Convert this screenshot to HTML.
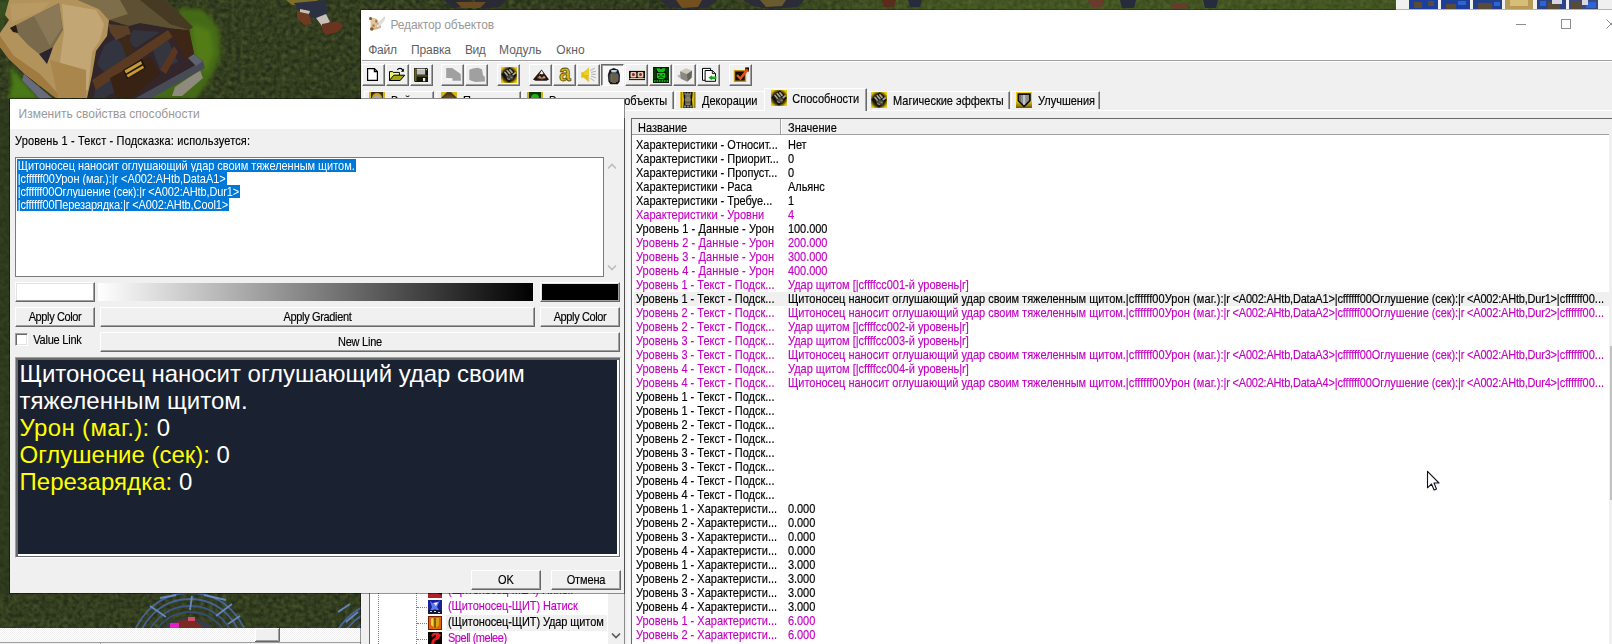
<!DOCTYPE html>
<html lang="ru"><head><meta charset="utf-8"><title>Редактор объектов</title>
<style>
*{box-sizing:border-box}
html,body{margin:0;padding:0}
body{width:1612px;height:644px;overflow:hidden;position:relative;background:#333e1f;font-family:"Liberation Sans",sans-serif;font-size:11px;color:#000}
.abs{position:absolute}
#bg{position:absolute;left:0;top:0;width:1612px;height:644px}
#main{position:absolute;left:360px;top:9px;width:1260px;height:640px;background:#f0f0f0;border-left:1px solid rgba(0,0,0,0.4);border-top:1px solid rgba(0,0,0,0.25);background-clip:padding-box}
#main .title{position:absolute;left:0;top:0;width:100%;height:28px;background:#fff}
#main .title .t{position:absolute;left:29.5px;top:7.6px;font-size:12px;color:#999;letter-spacing:-0.15px}
#main .menu{position:absolute;left:0;top:28px;width:100%;height:23px;background:#fff}
#main .menu span{position:absolute;top:5px;font-size:12px;color:#5f5f5f}
.row{position:absolute;left:634px;width:975px;height:14px;line-height:14px;white-space:nowrap;font-size:11px}
.row .c1{position:absolute;left:2px;top:0}
.row .c2{position:absolute;left:154px;top:0;letter-spacing:-0.058px}
.row.mag{color:#c400c4}
.row.w .c1{letter-spacing:0.1px}
.row.sel{background:#f0f0f0}
#dlg{position:absolute;left:9px;top:98px;width:616px;height:496px;background:#f0f0f0;background-clip:padding-box;border:1px solid rgba(0,0,0,0.42)}
#dlg .title{position:absolute;left:0;top:0;width:100%;height:30px;background:#fff}
#dlg .title span{position:absolute;left:8.5px;top:8px;font-size:12px;color:#999;letter-spacing:0}
.btn{position:absolute;background:#f0f0f0;border:1px solid;border-color:#fff #696969 #696969 #fff;box-shadow:inset -1px -1px 0 #a0a0a0;text-align:center;font-size:11px;white-space:nowrap}
.ta{height:13px;line-height:13px;font-size:11px;white-space:nowrap;background:#0078d7;color:#fff;padding:0 1px 0 0.7px}
.ta span{position:relative;top:1px}
.pv{font-size:24px;line-height:27px;color:#fff;white-space:nowrap}
.pv .y{color:#ffff00}
.tb{position:absolute;top:64px;width:23px;height:22px;background:#f0f0f0;border:1px solid;border-color:#fff #696969 #696969 #fff;box-shadow:inset -1px -1px 0 #a0a0a0}
.tb svg{position:absolute;left:3px;top:2px}
.tb.dn{background:#f8f8f8;border-color:#696969 #fff #fff #696969;box-shadow:inset 1px 1px 0 #a0a0a0}
.tab{position:absolute;top:91px;height:18px;background:#f0f0f0;border:1px solid;border-color:#fff #696969 transparent #fff;box-shadow:inset -1px 0 0 #a0a0a0;border-bottom:none;font-size:11px;line-height:14px;white-space:nowrap}
.tab svg{position:absolute;left:4px;top:0px}
.tab span{position:absolute;left:26px;top:2px}
.tab.act{top:88px;height:23px;z-index:2}
.tr{font-size:11px;line-height:14px;height:14px;white-space:nowrap}
.tr.mag{color:#c400c4}
.row .c1,.row .c2,.sy,.tr,.tab span{transform:scaleY(1.09);transform-origin:0 10.6px}
.s{display:inline-block;line-height:14px;transform:scaleY(1.09);transform-origin:0 10.6px}
.ta span{display:inline-block;transform:scaleY(1.09);transform-origin:0 10.1px}
.row .c1,.row .c2,.sy,.tr,.tab span,.s{-webkit-text-stroke:0.15px currentColor}
</style></head>
<body>
<svg id="bg" width="1612" height="644" viewBox="0 0 1612 644">
<defs>
<filter id="gr" x="0" y="0" width="100%" height="100%" color-interpolation-filters="sRGB"><feTurbulence type="fractalNoise" baseFrequency="0.22" numOctaves="2" seed="3" result="n"/><feColorMatrix type="matrix" values="0 0 0 0 0.29  0 0 0 0 0.34  0 0 0 0 0.17  1.1 0.9 0 0 -0.62"/></filter>
<filter id="th" x="0" y="0" width="100%" height="100%"><feTurbulence type="fractalNoise" baseFrequency="0.08 0.5" numOctaves="2" seed="5"/><feColorMatrix type="matrix" values="0 0 0 0 0.35  0 0 0 0 0.25  0 0 0 0 0.1  1.2 0.8 0 0 -0.7"/><feComposite in2="SourceGraphic" operator="in"/></filter>
<pattern id="dith" width="2" height="2" patternUnits="userSpaceOnUse"><rect width="2" height="2" fill="#fff"/><rect width="1" height="1" fill="#f0f0f0"/><rect x="1" y="1" width="1" height="1" fill="#f0f0f0"/></pattern>
<filter id="bl" x="-10%" y="-10%" width="120%" height="120%"><feGaussianBlur stdDeviation="2.2"/></filter>
<linearGradient id="tg" x1="0" y1="0" x2="1" y2="0"><stop offset="0" stop-color="#6a8a2a" stop-opacity="0"/><stop offset="0.350" stop-color="#6a8a2a" stop-opacity="0.300"/><stop offset="1" stop-color="#6a8a2a" stop-opacity="0.300"/></linearGradient>
</defs>
<rect width="1612" height="644" fill="#252e18"/>
<rect width="1612" height="644" filter="url(#gr)"/>
<!-- bright grass near hut -->
<g filter="url(#bl)">
<path d="M180 8 L204 10 L219 28 L221 55 L212 76 L196 99 L150 99 Z" fill="#456a14"/>
<path d="M192 24 L210 30 L214 52 L206 72 L196 66Z" fill="#527c12"/>
<path d="M10 66 L40 99 L8 99 L12 84Z" fill="#4a7a18"/>
<path d="M0 0 L9 0 L5 15 L0 33Z" fill="#35521c"/>
</g>
<path d="M175 87 L200 70 L203 78 L182 96 L172 96Z" fill="#8e8a7c"/>
<path d="M24 74 L52 98 L40 99 L22 80Z" fill="#676b7c"/>
<!-- hut wall -->
<path d="M109 20 L129 26 L140 23 L169 28 L189 30 L194 54 L203 61 L137 98 L87 98 L92 75 L96 51 L107 36 Z" fill="#33262a"/>
<path d="M104 46 L116 38 L128 50 L124 62 L104 72 L97 64Z" fill="#32343f"/>
<path d="M133 30 L160 32 L136 48 L128 42Z" fill="#34343e"/>
<path d="M152 48 L168 40 L178 62 L160 70Z" fill="#33353f"/>
<path d="M96 84 L120 74 L126 86 L104 98 L94 98Z" fill="#33343f"/>
<path d="M92 80 L168 30 L174 36 L96 90Z" fill="#5a3a20"/>
<path d="M168 30 L189 30 L194 54 L186 60 L176 42Z" fill="#3e2616"/>
<path d="M110 78 L150 56 L160 74 L132 98 L116 98Z" fill="#382214"/>
<path d="M108 24 L128 26 L131 34 L116 40 L110 32Z" fill="#5a4026"/>
<path d="M120 40 L128 34 L134 52 L126 56Z" fill="#3e2818"/>
<path d="M160 70 L174 46 L178 52 L166 74Z" fill="#5a3620"/>
<path d="M123 70 L142 59 L146 68 L127 79Z" fill="#1e1610"/>
<path d="M124.500 70.500 L141 61 L142 64 L126 73.500Z M126.500 75 L143 65.500 L144 68 L128 77.500Z" fill="#c89a34"/>
<path d="M203 61 L205 68 L150 99 L134 99 Z" fill="#474b56"/>
<path d="M194 54 L203 61 L196 66 L188 58Z" fill="#5e6370"/>
<!-- roof shadow part -->
<path d="M78 0 L166 0 L193 27 L189 30 L169 28 L140 23 L129 26 L109 20 L99 9Z" fill="#5e5032"/>
<path d="M78 0 L120 0 L128 14 L109 20 L99 9Z" fill="#7e6e4a"/>
<path d="M140 0 L166 0 L193 27 L189 30 L170 24Z" fill="#463a22"/>
<!-- light thatch -->
<path d="M9 0 L78 0 L99 9 L109 20 L107 36 L96 51 L92 75 L87 98 L56 98 L26 75 L9 59 L0 47 L0 33 L9 20 L5 15 Z" fill="#b3935c"/>
<path d="M62 4 L96 10 L104 24 L100 40 L92 52 L88 90 L72 92 L60 62 L64 32Z" fill="#c2a674"/>
<path d="M0 36 L14 56 L40 74 L62 98 L56 98 L26 75 L9 59 L0 47Z" fill="#a07a3e"/>
<path d="M10 4 L50 2 L40 12 L12 22Z" fill="#b89a62"/>
<path d="M50 60 L86 70 L86 98 L58 98Z" fill="#a8864c"/>
<!-- dormer -->
<path d="M10 28 L59 3 L63 30 L53 47 L39 54 L28 45 L17 33 Z" fill="#7a6a4c"/>
<path d="M34 16 L59 3 L62 28 L50 46Z" fill="#8a7856"/>
<path d="M39 54 L53 47 L51 53 L47 64Z" fill="#2a2430"/>
<path d="M10 28 L16 25 L18 33 L13 32Z" fill="#2a1c14"/>
<!-- figure top -->
<path d="M286 0 L318 0 L316 4 L292 5Z" fill="#7e6e2c"/>
<path d="M294 3 L326 0 L327 14 L318 20 L300 12Z" fill="#2b3142"/>
<path d="M297 10 L309 14 L312 24 L304 25 L297 18Z" fill="#6d3a22"/>
<path d="M316 18 L326 14 L330 22 L322 26Z" fill="#c8c0b8"/>
<path d="M322 24 L338 21 L343 26 L338 32 L326 35 L322 30Z" fill="#6a3420"/>
<path d="M300 9 L310 11 L309 14 L300 12Z" fill="#c8c0b8"/>
<rect x="700" y="0" width="696" height="10" fill="url(#tg)"/>
<!-- top strip figures -->
<path d="M444 0 H470 L466 6 L452 8Z M474 0 H506 L500 7 L482 9 Z" fill="#2a2a34"/>
<path d="M456 2 H486 L480 8 L462 8Z" fill="#6a4a20"/>
<path d="M660 0 H716 L708 8 L690 9 L668 7Z" fill="#2b2c38"/><path d="M676 0 H702 L698 7 L682 8Z" fill="#74501e"/>
<path d="M744 0 H804 L798 7 L770 9 L752 6Z" fill="#2b2c38"/><path d="M760 0 H786 L782 6 L766 7Z" fill="#6a5a30"/>
<path d="M882 0 H896 L894 7 L884 7Z" fill="#5a2c1c"/>
<path d="M908 0 H922 L920 7 L910 7Z M1120 0 H1136 L1134 8 L1122 8Z M1203 0 H1218 L1216 8 L1205 8Z" fill="#262c3c"/>
<path d="M1088 0 H1104 L1102 7 L1092 8Z M1170 3 H1188 L1186 8 L1174 9Z" fill="#6a3a2a"/>
<!-- top-right panel -->
<rect x="1396" y="0" width="216" height="10" fill="#f0f0f0"/>
<g>
<rect x="1409" y="0" width="29" height="9" fill="#1c3f9c"/><rect x="1441" y="0" width="29" height="9" fill="#1d3f98"/><rect x="1473" y="0" width="29" height="9" fill="#243f8a"/><rect x="1505" y="0" width="28" height="9" fill="#b89a58"/><rect x="1537" y="0" width="29" height="9" fill="#2a4286"/><rect x="1569" y="0" width="29" height="9" fill="#3a4a7a"/>
<path d="M1414 2 h8 v6 h-8z M1428 1 h6 v5 h-6z M1446 4 h10 v5 h-10z M1478 3 h14 v6 h-14z M1548 2 h12 v7 h-12z M1572 1 h10 v8 h-10z" fill="#5a4a38"/>
<path d="M1458 1 h8 v4 h-8z M1494 2 h6 v4 h-6z M1540 1 h6 v5 h-6z M1586 2 h10 v6 h-10z" fill="#2b63d8"/>
<path d="M1510 0 h18 v6 h-18z" fill="#d8bc7a"/>
<path d="M1552 0 h10 v4 h-10z M1582 0 h6 v5 h-6z" fill="#d8d8e0"/>
</g>
<!-- left strip darker -->
<rect x="0" y="99" width="10" height="495" fill="#2c361e" opacity=".55"/>
<!-- bottom magic circles -->
<g fill="none" stroke="#4a6aa6" stroke-width="1.800" opacity=".85">
<circle cx="190" cy="652" r="59"/><circle cx="190" cy="652" r="53"/><circle cx="190" cy="652" r="46" stroke="#3e5a94"/><circle cx="190" cy="652" r="40" stroke="#38507e"/>
<circle cx="392" cy="664" r="64"/><circle cx="392" cy="664" r="57"/><circle cx="392" cy="664" r="50" stroke="#3e5a94"/>
</g>
<g stroke="#6b8ed0" stroke-width="1.800" fill="none" opacity=".9"><path d="M150 606 L166 617 M192 596 L190 610 M232 604 L216 616 M160 598 L176 595 M204 595 L226 600 M240 616 L228 624 M338 612 L350 604 M346 622 L358 612"/></g>
<ellipse cx="188" cy="640" rx="30" ry="22" fill="#353c4a"/>
<ellipse cx="186" cy="630" rx="17" ry="10" fill="#7a2a22"/>
<path d="M170 623 h9 v5 h-9z" fill="#e020c8"/><path d="M188 617 h7 v4 h-7z" fill="#d84a6a"/>
<!-- horizontal scrollbar of underlying window -->
<rect x="0" y="628" width="361" height="14" fill="url(#dith)"/>
<rect x="255" y="628" width="25" height="14" fill="#f0f0f0"/>
<path d="M255 641.5 H279.5 V628" fill="none" stroke="#696969"/><path d="M255.5 641 V628.5 H279" fill="none" stroke="#fff"/><path d="M256 640.5 H278.5 V629" fill="none" stroke="#a0a0a0"/>
<rect x="0" y="642" width="361" height="2" fill="#f0f0f0"/>
<rect x="0" y="642" width="361" height="1" fill="#a0a0a0"/>
<rect x="100" y="643" width="1" height="1" fill="#a0a0a0"/>
</svg>

<div id="main">
 <div class="title"><span class="t">Редактор объектов</span></div>
 <div class="menu"><span style="left:7.2px;letter-spacing:-0.2px">Файл</span><span style="left:50px;letter-spacing:-0.1px">Правка</span><span style="left:104px;letter-spacing:-0.5px">Вид</span><span style="left:138px">Модуль</span><span style="left:195.3px;letter-spacing:0.15px">Окно</span></div>
</div>
<div class="abs" style="left:362px;top:60px;width:1250px;height:1px;background:#a0a0a0"></div>
<div class="abs" style="left:362px;top:61px;width:1250px;height:1px;background:#fff"></div>
<!-- window icon -->
<svg class="abs" style="left:368px;top:16px" width="18" height="16" viewBox="0 0 18 16"><path d="M9 8 L16.500 1 L16 4.500 L11 10 Z" fill="#e4e2dc" stroke="#b9b5ab" stroke-width=".5"/><path d="M2.500 2 C5 1.500 8 2.500 10 4 L9 12 C7 13.500 4 14 2.500 13.500 Z" fill="#dcc79c"/><path d="M1 2.500 a1.600 1.600 0 1 0 3.200 0 a1.600 1.600 0 1 0 -3.200 0" fill="#7a5a38"/><path d="M2 13.500 C5 14.500 10 13.500 13 11.500 L13 9.500 C10 11 6 12 3 11.500Z" fill="#cdb48a"/><circle cx="3.800" cy="13" r="1.700" fill="#7a5a38"/><rect x="4.500" y="8.600" width="2" height="2" fill="#e04a2a"/><path d="M7.500 3.500 L9.500 4.500 L9 7 L7 6Z" fill="#b9703c"/><path d="M9 6 L10.500 7 L10 9 L8.800 8.500Z" fill="#9ab0b8"/></svg>
<!-- caption buttons -->
<div class="abs" style="left:1516px;top:24px;width:10px;height:1px;background:#8c8c8c"></div>
<div class="abs" style="left:1561px;top:19px;width:10px;height:10px;border:1px solid #8c8c8c"></div>
<svg class="abs" style="left:1606px;top:19px" width="10" height="10" viewBox="0 0 10 10"><path d="M0.5 0.5 L9.5 9.5 M9.5 0.5 L0.5 9.5" stroke="#8c8c8c" stroke-width="1" fill="none"/></svg>
<!-- toolbar -->
<div class="tb" style="left:362px"><svg width="16" height="16" viewBox="0 0 16 16"><path d="M1.600 1.600 H8.400 L11.400 4.600 V13.400 H1.600 Z" fill="#fff" stroke="#000" stroke-width="1.200"/><path d="M8.400 1.600 V4.600 H11.400" fill="none" stroke="#000" stroke-width="1.200"/></svg></div>
<div class="tb" style="left:386px"><svg width="17" height="16" viewBox="-1 0 17 16" style="left:2px"><path d="M-0.500 13.400 V4.600 H2.600 L3.200 5.400 H9.400 V8.200" fill="#f2f272" stroke="#000" stroke-width="1"/><path d="M4.300 6.700 H8.700" stroke="#fafad0" stroke-width="1"/><path d="M3.800 8.200 H14.700 L10.200 13.500 H-0.700 Z" fill="#a6a612" stroke="#000" stroke-width="1"/><path d="M7.300 3 C8.500 0.800 11.500 0.800 13 3.400" fill="none" stroke="#000" stroke-width="1.100"/><path d="M13.900 1.600 V4.700 H10.900 Z" fill="#000"/></svg></div>
<div class="tb" style="left:410px"><svg width="16" height="16" viewBox="0 0 16 16"><path d="M0 1 H13 L14 2 V15 H1 L0 14 Z" fill="#15150a"/><rect x="0.500" y="1.500" width="2" height="12.500" fill="#6b6524"/><rect x="2.800" y="1.800" width="8.400" height="5.800" fill="#bdbdbd"/><rect x="2.800" y="1.800" width="8.400" height="1.200" fill="#d8d8d8"/><rect x="2.500" y="8.600" width="11" height="0.700" fill="#a39626"/><rect x="9" y="11" width="2.200" height="3.200" fill="#ecece4"/><rect x="12" y="2.200" width="1" height="1" fill="#e8e8e8"/></svg></div>
<div class="tb" style="left:441px"><svg width="17" height="16" viewBox="0 0 17 16"><path d="M1.200 11.900 H7.500" stroke="#fff" stroke-width="1"/><path d="M1.200 1 H7.200 L15.700 7.100 L16 13.800 H7.500 V11.200 L1.200 10.900 Z" fill="#a0a0a0"/></svg></div>
<div class="tb" style="left:465px"><svg width="16" height="16" viewBox="0 0 16 16"><path d="M0.300 2.700 L4 1.600 L8.500 0.800 L13 2.300 L14 8.300 L15.900 10.100 L15.900 14.600 L6.200 15 L0.300 13.100 Z" fill="#a0a0a0"/></svg></div>
<div class="tb" style="left:497px"><svg width="16" height="16" viewBox="0 0 16 16"><defs><radialGradient id="fg" cx="50%" cy="50%" r="72%"><stop offset="0.550" stop-color="#3a3004"/><stop offset="0.800" stop-color="#e6c40c"/><stop offset="1" stop-color="#f2d410"/></radialGradient></defs><rect width="16" height="16" fill="url(#fg)"/><path d="M8.800 0.200 L15.800 8 L8 15.800 L0.200 7.600 Z" fill="#14130c"/><path d="M4 5.500 L6.300 8.200 M6.300 3.700 L8.800 6.600 M8.900 2.800 L11 5.400 M12.200 7.600 L14.200 6" stroke="#aaa89c" stroke-width="1.700" stroke-linecap="round"/><path d="M5 9.500 L9.500 7.200 L12.500 9.500 L11.500 12.500 L7.500 13 Z" fill="#4a4942"/><path d="M6 11.500 L9 12.800 M9.500 10 L11.500 10.800" stroke="#8d8b80" stroke-width="1.100"/></svg></div>
<div class="tb" style="left:529px"><svg width="16" height="16" viewBox="0 0 16 16"><path d="M8.500 2.600 L16 12.400 L13.500 13.800 H2.500 L0 12.400 Z" fill="#27140a"/><path d="M8.500 3.600 L10.500 6.500 L9 7.500 L7.300 6.800 L6 8 Z" fill="#f4f0ea"/><path d="M4 11 L6.500 8.500 L8.500 10.500 L11 8.500 L13 11 L9 12.500 Z" fill="#8a6a50"/><path d="M5.500 10.200 L7 9.200 L8 10.500 Z M10 10.500 L11.200 9.500 L12 11Z" fill="#e8e0d8"/></svg></div>
<div class="tb" style="left:553px"><svg width="16" height="16" viewBox="0 0 16 16"><text x="0" y="0" transform="translate(8 14.200) scale(0.86 1)" text-anchor="middle" font-family="Liberation Sans,sans-serif" font-weight="bold" font-size="24" fill="#d6be16" stroke="#5e5008" stroke-width="0.900">a</text></svg></div>
<div class="tb" style="left:577px"><svg width="16" height="16" viewBox="0 0 16 16"><path d="M0.300 5.300 H2.800 L7.800 0.800 V15 L2.800 10.500 H0.300 Z" fill="#e2c206" stroke="#d8c890" stroke-width="0.600"/><path d="M2.800 5.300 L7.800 0.800 V8 H2.800Z" fill="#ecd020"/><path d="M9.300 3.400 L13.800 1.200 M10 5.400 L14.900 4.200 M10.400 7.300 H14.900 M10 9 L14.900 10.900 M9.300 11.300 L13.400 13.900" stroke="#a8a8a8" stroke-width="0.900"/></svg></div>
<div class="tb dn" style="left:601px"><svg width="16" height="17" viewBox="0 0 16 17" style="left:4px;top:3px"><path d="M7.700 0 L12.200 1.700 L14 6.900 L13.700 13.600 L11.800 16.200 H4.400 L2.500 13.600 L1.800 6.900 L3.600 1.700 Z" fill="#15151a"/><path d="M4.800 2.100 H11.100 L10.300 4.500 H5.500 Z" fill="#a9c0ca"/><path d="M6 2.400 H9.500 L9 3.400 H6.500Z" fill="#dfeaf0"/><path d="M5.100 5.400 V14 M7 5.200 V15 M9 5.200 V15 M11 5.400 V14" stroke="#cdbb88" stroke-width="0.900"/><path d="M3.200 6.500 V12.500 M12.800 6.500 V12.500" stroke="#4a5460" stroke-width="1"/></svg></div>
<div class="tb" style="left:625px"><svg width="16" height="16" viewBox="0 0 16 16"><rect x="0" y="3.900" width="16.200" height="9.200" fill="#120a08"/><rect x="1.500" y="5" width="5.800" height="5.400" rx="1" fill="#e2cdb6"/><rect x="8.600" y="5" width="5.800" height="5.400" rx="1" fill="#e2cdb6"/><circle cx="4.400" cy="7.600" r="1.500" fill="#9c2222"/><circle cx="11.500" cy="7.600" r="1.500" fill="#9c2222"/><rect x="0.600" y="11" width="15" height="1.100" fill="#d9c8b4"/></svg></div>
<div class="tb" style="left:649px"><svg width="16" height="16" viewBox="0 0 16 16"><rect width="16" height="16" fill="#041a04"/><path d="M1 1 V12 M2.200 1 V12 M13.800 1 V12 M15 1 V12" stroke="#0c5a0c" stroke-width="0.700"/><path d="M3.500 1.200 H6.500 L8 2.200 L9.500 1.200 H12.500 L12 3.600 L10.400 5.200 H5.600 L4 3.600 Z" fill="#14c414"/><path d="M3.900 6 H12.200 V10.500 L10.500 11.900 H5.500 L3.900 10.500 Z" fill="#14c414"/><path d="M5 7.200 L7.200 7.800 V8.500 H5Z M11 7.200 L8.800 7.800 V8.500 H11Z" fill="#041a04"/><path d="M5.600 10.800 Q8 8.800 10.400 10.800" fill="none" stroke="#041a04" stroke-width="0.900"/><path d="M1 13.300 h1.700 v1.500 h-1.700z M3.500 13.300 h1.700 v1.500 h-1.700z M6 13.300 h1.700 v1.500 h-1.700z M8.500 13.300 h1.700 v1.500 h-1.700z M11 13.300 h1.700 v1.500 h-1.700z M13.500 13.300 h1.700 v1.500 h-1.700z" fill="#14c414"/></svg></div>
<div class="tb" style="left:673px"><svg width="16" height="16" viewBox="0 0 16 16"><path d="M0 8.800 L3.800 7.300 V11.700 Z" fill="#b4b4b4"/><path d="M3 4.300 L9 1.300 L15.100 3.400 L9.900 6.900 Z" fill="#cbc7b9"/><path d="M3 4.300 L9.900 6.900 L10.300 14.700 L3.800 11.700 Z" fill="#8b887f"/><path d="M9.900 6.900 L15.100 3.400 L14.700 10.800 L10.300 14.700 Z" fill="#67645c"/></svg></div>
<div class="tb" style="left:697px"><svg width="16" height="16" viewBox="0 0 16 16"><path d="M1.500 1.400 H9.600 V13.300 H1.500 Z" fill="#fff" stroke="#000" stroke-width="1"/><path d="M4.100 3.500 H11.300 L14.500 6.600 V14.300 H4.100 Z" fill="#fff" stroke="#000" stroke-width="1"/><path d="M11.300 3.500 V6.600 H14.500" fill="none" stroke="#000" stroke-width="0.900"/><path d="M7.500 10.800 L10.800 8.300 V9.400 H15.400 V12.300 H10.800 V13.300 Z" fill="#14a018"/><path d="M11.500 10 H14.500" stroke="#7ad07a" stroke-width="0.800"/></svg></div>
<div class="tb" style="left:729px"><svg width="16" height="16" viewBox="0 0 16 16"><rect x="1.500" y="3.700" width="11" height="10.600" fill="#120a04" stroke="#c89812" stroke-width="1.400"/><path d="M12.200 0.400 H16 V4.500 H12.200Z" fill="#0a0a0a"/><path d="M4 8 L7.400 11.600 L14.700 2.400" fill="none" stroke="#e2521a" stroke-width="2.500"/></svg></div>
<!-- tabs -->
<div class="tab" style="left:364px;width:70px"><svg width="16" height="16" viewBox="0 0 16 16"><rect width="16" height="16" fill="#d8b416"/><rect x="2" y="0" width="12" height="16" fill="#3a2e12"/><circle cx="8" cy="6" r="5" fill="#c9a020"/><circle cx="8" cy="6" r="3" fill="#a9a9a2"/></svg><span>Войска</span></div>
<div class="tab" style="left:436px;width:85px"><svg width="16" height="16" viewBox="0 0 16 16"><rect width="16" height="16" fill="#d8b416"/><path d="M8 -2 L18 8 L8 18 L-2 8Z" fill="#4a3a16"/><ellipse cx="8" cy="6" rx="5" ry="3" fill="#6a4a1e"/></svg><span>Предметы</span></div>
<div class="tab" style="left:522px;width:152px"><svg width="16" height="16" viewBox="0 0 16 16"><rect width="16" height="16" fill="#c9b312"/><rect x="2" y="0" width="12" height="16" fill="#0a3a08"/><circle cx="8" cy="6" r="4" fill="#1fae16"/></svg><span>Разрушаемые объекты</span></div>
<div class="tab" style="left:675px;width:91px"><svg width="16" height="16" viewBox="0 0 16 16"><rect width="16" height="16" fill="#d9b912"/><path d="M1.500 0 V16 M14.500 0 V16" stroke="#8a7408" stroke-width="0.800"/><path d="M3.300 0 Q4.800 8 3.300 16 H12.700 Q11.200 8 12.700 0 Z" fill="#0c0b08"/><path d="M4.300 0.600 H5.800 V1.600 H7 V0.600 H8.600 V1.600 H9.800 V0.600 H11.200 V2.800 H10.500 V6.800 H11.200 V8.400 H10.500 V13 H5.300 V8.400 H4.700 V6.800 H5.300 V2.800 H4.300 Z" fill="#878069"/><path d="M6 3.500 H9.800 V4.500 H6Z M6 9.500 H9.800 V11.500 H6Z" fill="#5e5948"/><path d="M4 13.600 h2.200 v1.800 h-2.200z M6.800 13.600 h2.200 v1.800 h-2.200z M9.600 13.600 h2.200 v1.800 h-2.200z" fill="#8a8a86"/></svg><span>Декорации</span></div>
<div class="tab act" style="left:764px;width:103px"><svg style="top:1px;left:6px" width="16" height="16" viewBox="0 0 16 16"><rect width="16" height="16" fill="url(#fg)"/><path d="M8.800 0.200 L15.800 8 L8 15.800 L0.200 7.600 Z" fill="#14130c"/><path d="M4 5.500 L6.300 8.200 M6.300 3.700 L8.800 6.600 M8.900 2.800 L11 5.400 M12.200 7.600 L14.200 6" stroke="#aaa89c" stroke-width="1.700" stroke-linecap="round"/><path d="M5 9.500 L9.500 7.200 L12.500 9.500 L11.500 12.500 L7.500 13 Z" fill="#4a4942"/><path d="M6 11.500 L9 12.800 M9.500 10 L11.500 10.800" stroke="#8d8b80" stroke-width="1.100"/></svg><span style="left:27.300px;top:3px">Способности</span></div>
<div class="tab" style="left:866px;width:144px"><svg width="16" height="16" viewBox="0 0 16 16"><rect width="16" height="16" fill="url(#fg)"/><path d="M8.800 0.200 L15.800 8 L8 15.800 L0.200 7.600 Z" fill="#14130c"/><path d="M4 5.500 L6.300 8.200 M6.300 3.700 L8.800 6.600 M8.900 2.800 L11 5.400 M12.200 7.600 L14.200 6" stroke="#aaa89c" stroke-width="1.700" stroke-linecap="round"/><path d="M5 9.500 L9.500 7.200 L12.500 9.500 L11.500 12.500 L7.500 13 Z" fill="#4a4942"/><path d="M6 11.500 L9 12.800 M9.500 10 L11.500 10.800" stroke="#8d8b80" stroke-width="1.100"/></svg><span>Магические эффекты</span></div>
<div class="tab" style="left:1011px;width:89px"><svg width="16" height="16" viewBox="0 0 16 16"><defs><linearGradient id="sg" x1="0" y1="0" x2="0" y2="1"><stop offset="0.550" stop-color="#f0d010"/><stop offset="1" stop-color="#6a5804"/></linearGradient></defs><rect width="16" height="16" fill="url(#sg)"/><path d="M1.500 1.200 H14.800 V9 L8 15.600 L1.500 9 Z" fill="#0c0c14"/><path d="M3.300 3 H13 V8.400 L8 13.300 L3.300 8.400 Z" fill="#8e8e8e"/><path d="M7 3 H9.300 V12 L8 13.300 L7 12.300Z" fill="#c4c4c4"/><path d="M3.300 3 H5 V9.500 L3.300 8.400Z" fill="#6e6e72"/></svg><span>Улучшения</span></div>
<div class="abs" style="left:361px;top:98px;width:263px;height:1px;background:#f0f0f0"></div>

<div class="abs" style="left:362px;top:110px;width:1250px;height:1px;background:#fff"></div>
<div class="abs" style="left:631px;top:118px;width:981px;height:1px;background:#696969"></div>
<div class="abs" style="left:624px;top:118px;width:1px;height:526px;background:#8a8a8a"></div>
<div class="abs" style="left:627px;top:120px;width:3px;height:524px;background:#f6f7fb"></div>
<div class="abs" style="left:631px;top:118px;width:1px;height:526px;background:#696969"></div>
<div class="abs" style="left:632px;top:119px;width:980px;height:525px;background:#fff"></div>
<div class="abs" style="left:632px;top:119px;width:977px;height:16px;background:#f0f0f0;border-bottom:1px solid #a0a0a0"></div>
<div class="abs" style="left:780px;top:119px;width:1px;height:15px;background:#a0a0a0"></div>
<div class="abs" style="left:781px;top:119px;width:1px;height:15px;background:#fff"></div>
<div class="abs sy" style="left:638px;top:121px;line-height:14px;font-size:11px">Название</div>
<div class="abs sy" style="left:788px;top:121px;line-height:14px;font-size:11px">Значение</div>
<div class="abs" style="left:1609px;top:119px;width:3px;height:525px;background:#f0f0f0"></div>
<div class="abs" style="left:1610px;top:346px;width:2px;height:154px;background:#c1c1c1"></div>
<div class="row" style="top:138px"><span class="c1">Характеристики - Относит...</span><span class="c2">Нет</span></div>
<div class="row" style="top:152px"><span class="c1">Характеристики - Приорит...</span><span class="c2">0</span></div>
<div class="row" style="top:166px"><span class="c1">Характеристики - Пропуст...</span><span class="c2">0</span></div>
<div class="row" style="top:180px"><span class="c1">Характеристики - Раса</span><span class="c2">Альянс</span></div>
<div class="row" style="top:194px"><span class="c1">Характеристики - Требуе...</span><span class="c2">1</span></div>
<div class="row mag" style="top:208px"><span class="c1">Характеристики - Уровни</span><span class="c2">4</span></div>
<div class="row w" style="top:222px"><span class="c1">Уровень 1 - Данные - Урон</span><span class="c2">100.000</span></div>
<div class="row mag w" style="top:236px"><span class="c1">Уровень 2 - Данные - Урон</span><span class="c2">200.000</span></div>
<div class="row mag w" style="top:250px"><span class="c1">Уровень 3 - Данные - Урон</span><span class="c2">300.000</span></div>
<div class="row mag w" style="top:264px"><span class="c1">Уровень 4 - Данные - Урон</span><span class="c2">400.000</span></div>
<div class="row mag" style="top:278px"><span class="c1">Уровень 1 - Текст - Подск...</span><span class="c2"><span style="letter-spacing:0px">Удар щитом [|cffffcc001-й уровень|r]</span></span></div>
<div class="row sel" style="top:292px"><span class="c1">Уровень 1 - Текст - Подск...</span><span class="c2"><span style="letter-spacing:-0.025px">Щитоносец наносит оглушающий удар своим тяжеленным щитом.</span><span style="letter-spacing:0.097px">|cffffff00Урон (маг.):</span><span style="letter-spacing:-0.206px">|r &lt;A002:AHtb,DataA1&gt;</span><span style="letter-spacing:-0.073px">|cffffff00Оглушение (сек):</span><span style="letter-spacing:-0.200px">|r &lt;A002:AHtb,Dur1&gt;</span><span style="letter-spacing:0.012px">|cffffff00...</span></span></div>
<div class="row mag" style="top:306px"><span class="c1">Уровень 2 - Текст - Подск...</span><span class="c2"><span style="letter-spacing:-0.025px">Щитоносец наносит оглушающий удар своим тяжеленным щитом.</span><span style="letter-spacing:0.097px">|cffffff00Урон (маг.):</span><span style="letter-spacing:-0.206px">|r &lt;A002:AHtb,DataA2&gt;</span><span style="letter-spacing:-0.073px">|cffffff00Оглушение (сек):</span><span style="letter-spacing:-0.200px">|r &lt;A002:AHtb,Dur2&gt;</span><span style="letter-spacing:0.012px">|cffffff00...</span></span></div>
<div class="row mag" style="top:320px"><span class="c1">Уровень 2 - Текст - Подск...</span><span class="c2"><span style="letter-spacing:0px">Удар щитом [|cffffcc002-й уровень|r]</span></span></div>
<div class="row mag" style="top:334px"><span class="c1">Уровень 3 - Текст - Подск...</span><span class="c2"><span style="letter-spacing:0px">Удар щитом [|cffffcc003-й уровень|r]</span></span></div>
<div class="row mag" style="top:348px"><span class="c1">Уровень 3 - Текст - Подск...</span><span class="c2"><span style="letter-spacing:-0.025px">Щитоносец наносит оглушающий удар своим тяжеленным щитом.</span><span style="letter-spacing:0.097px">|cffffff00Урон (маг.):</span><span style="letter-spacing:-0.206px">|r &lt;A002:AHtb,DataA3&gt;</span><span style="letter-spacing:-0.073px">|cffffff00Оглушение (сек):</span><span style="letter-spacing:-0.200px">|r &lt;A002:AHtb,Dur3&gt;</span><span style="letter-spacing:0.012px">|cffffff00...</span></span></div>
<div class="row mag" style="top:362px"><span class="c1">Уровень 4 - Текст - Подск...</span><span class="c2"><span style="letter-spacing:0px">Удар щитом [|cffffcc004-й уровень|r]</span></span></div>
<div class="row mag" style="top:376px"><span class="c1">Уровень 4 - Текст - Подск...</span><span class="c2"><span style="letter-spacing:-0.025px">Щитоносец наносит оглушающий удар своим тяжеленным щитом.</span><span style="letter-spacing:0.097px">|cffffff00Урон (маг.):</span><span style="letter-spacing:-0.206px">|r &lt;A002:AHtb,DataA4&gt;</span><span style="letter-spacing:-0.073px">|cffffff00Оглушение (сек):</span><span style="letter-spacing:-0.200px">|r &lt;A002:AHtb,Dur4&gt;</span><span style="letter-spacing:0.012px">|cffffff00...</span></span></div>
<div class="row" style="top:390px"><span class="c1">Уровень 1 - Текст - Подск...</span><span class="c2"></span></div>
<div class="row" style="top:404px"><span class="c1">Уровень 1 - Текст - Подск...</span><span class="c2"></span></div>
<div class="row" style="top:418px"><span class="c1">Уровень 2 - Текст - Подск...</span><span class="c2"></span></div>
<div class="row" style="top:432px"><span class="c1">Уровень 2 - Текст - Подск...</span><span class="c2"></span></div>
<div class="row" style="top:446px"><span class="c1">Уровень 3 - Текст - Подск...</span><span class="c2"></span></div>
<div class="row" style="top:460px"><span class="c1">Уровень 3 - Текст - Подск...</span><span class="c2"></span></div>
<div class="row" style="top:474px"><span class="c1">Уровень 4 - Текст - Подск...</span><span class="c2"></span></div>
<div class="row" style="top:488px"><span class="c1">Уровень 4 - Текст - Подск...</span><span class="c2"></span></div>
<div class="row" style="top:502px"><span class="c1">Уровень 1 - Характеристи...</span><span class="c2">0.000</span></div>
<div class="row" style="top:516px"><span class="c1">Уровень 2 - Характеристи...</span><span class="c2">0.000</span></div>
<div class="row" style="top:530px"><span class="c1">Уровень 3 - Характеристи...</span><span class="c2">0.000</span></div>
<div class="row" style="top:544px"><span class="c1">Уровень 4 - Характеристи...</span><span class="c2">0.000</span></div>
<div class="row" style="top:558px"><span class="c1">Уровень 1 - Характеристи...</span><span class="c2">3.000</span></div>
<div class="row" style="top:572px"><span class="c1">Уровень 2 - Характеристи...</span><span class="c2">3.000</span></div>
<div class="row" style="top:586px"><span class="c1">Уровень 3 - Характеристи...</span><span class="c2">3.000</span></div>
<div class="row" style="top:600px"><span class="c1">Уровень 4 - Характеристи...</span><span class="c2">3.000</span></div>
<div class="row mag" style="top:614px"><span class="c1">Уровень 1 - Характеристи...</span><span class="c2">6.000</span></div>
<div class="row mag" style="top:628px"><span class="c1">Уровень 2 - Характеристи...</span><span class="c2">6.000</span></div>
<div class="row mag" style="top:642px"><span class="c1">Уровень 3 - Характеристи...</span><span class="c2">6.000</span></div>

<div class="abs" style="left:369px;top:593px;width:1px;height:51px;background:#696969"></div>
<div class="abs" style="left:370px;top:593px;width:238px;height:51px;background:#fff"></div>
<div class="abs" style="left:608px;top:593px;width:16px;height:51px;background:#f0f0f0"></div>
<svg class="abs" style="left:611px;top:632px" width="10" height="8" viewBox="0 0 10 8"><path d="M1 1.5 L5 5.5 L9 1.5" fill="none" stroke="#5a5a5a" stroke-width="1.7"/></svg>
<div class="abs" style="left:378px;top:593px;width:0;height:51px;border-left:1px dotted #808080"></div>
<div class="abs" style="left:416px;top:593px;width:0;height:51px;border-left:1px dotted #808080"></div>
<div class="abs" style="left:417px;top:607px;width:10px;height:0;border-top:1px dotted #808080"></div>
<div class="abs" style="left:417px;top:623px;width:10px;height:0;border-top:1px dotted #808080"></div>
<div class="abs" style="left:417px;top:639px;width:10px;height:0;border-top:1px dotted #808080"></div>
<div class="abs" style="left:446px;top:615px;width:161px;height:16px;background:#f0f0f0"></div>
<svg class="abs" style="left:428px;top:584px" width="14" height="14" viewBox="0 0 14 14"><rect width="14" height="14" fill="#1a0c10"/><path d="M0 10 L6 8 L14 11 V14 H0Z" fill="#b0202a"/></svg>
<svg class="abs" style="left:428px;top:600px" width="14" height="14" viewBox="0 0 14 14"><rect width="14" height="14" fill="#1a1f9a"/><path d="M2 1 L7 5 L12 0 L9 7 L13 13 L7 9 L1 13 L4 7Z" fill="#5b7df0"/><path d="M5 3 L10 2 L8 6Z" fill="#e8f0ff"/><path d="M0 10 H14 V14 H0Z" fill="#151a3a"/><path d="M2 11 H4 V12 H2Z M6 11 H8 V12 H6Z M10 12 H12 V13 H10Z" fill="#c8d0f0"/></svg>
<svg class="abs" style="left:428px;top:616px" width="14" height="14" viewBox="0 0 14 14"><rect width="14" height="14" fill="#7a1c04"/><rect x="1" y="1" width="12" height="12" fill="#e2620c"/><path d="M3 2 H11 V9 L7 13 L3 9Z" fill="#d9a514"/><path d="M6 2 H8 V12 H6Z" fill="#8a5a08"/><path d="M3 3 L5 2 V10 L3 9Z" fill="#f6d84a"/></svg>
<svg class="abs" style="left:428px;top:632px" width="14" height="14" viewBox="0 0 14 14"><rect width="14" height="14" fill="#050505"/><path d="M3 4 L5 1 L10 0.5 L13 3 L11 7 L7 9 L6 12 L3 12 L4 8 L8 5 L8 3 L6 3 L5 5Z" fill="#e0201c"/></svg>
<div class="abs tr mag" style="left:448px;top:583px;letter-spacing:-0.1px">(Щитоносец-МЕЧ) Пинок</div>
<div class="abs tr mag" style="left:448px;top:599px;letter-spacing:-0.1px">(Щитоносец-ЩИТ) Натиск</div>
<div class="abs tr" style="left:448px;top:615px;letter-spacing:-0.1px">(Щитоносец-ЩИТ) Удар щитом</div>
<div class="abs tr mag" style="left:448px;top:631px;letter-spacing:-0.48px">Spell (melee)</div>

<div id="dlg">
 <div class="title"><span>Изменить свойства способности</span></div>
</div>
<div class="abs sy" style="left:15px;top:134px;line-height:14px;font-size:11px;letter-spacing:0.14px;white-space:nowrap">Уровень 1 - Текст - Подсказка: используется:</div>
<div class="abs" style="left:15px;top:157px;width:589px;height:120px;background:#fff;border:1px solid #7a7a7a"></div>
<div class="abs ta" style="left:17px;top:159px;letter-spacing:-0.04px"><span>Щитоносец наносит оглушающий удар своим тяжеленным щитом.</span></div>
<div class="abs ta" style="left:17px;top:172px;letter-spacing:-0.072px"><span>|cffffff00Урон (маг.):|r &lt;A002:AHtb,DataA1&gt;</span></div>
<div class="abs ta" style="left:17px;top:185px;letter-spacing:-0.147px"><span>|cffffff00Оглушение (сек):|r &lt;A002:AHtb,Dur1&gt;</span></div>
<div class="abs ta" style="left:17px;top:198px;letter-spacing:-0.114px"><span>|cffffff00Перезарядка:|r &lt;A002:AHtb,Cool1&gt;</span></div>
<svg class="abs" style="left:607px;top:162px" width="10" height="8" viewBox="0 0 10 8"><path d="M1 6.5 L5 2.5 L9 6.5" fill="none" stroke="#bdbdbd" stroke-width="1.6"/></svg>
<svg class="abs" style="left:607px;top:264px" width="10" height="8" viewBox="0 0 10 8"><path d="M1 1.5 L5 5.5 L9 1.5" fill="none" stroke="#bdbdbd" stroke-width="1.6"/></svg>
<div class="abs" style="left:15px;top:282px;width:80px;height:20px;background:#fff;border:1px solid;border-color:#fff #696969 #696969 #fff;box-shadow:inset -1px -1px 0 #a0a0a0,inset 1px 1px 0 #e3e3e3"></div>
<div class="abs" style="left:98px;top:283px;width:435px;height:18px;background:linear-gradient(90deg,#fff 0%,#000 100%)"></div>
<div class="abs" style="left:540px;top:282px;width:80px;height:20px;background:#000;border:1px solid;border-color:#fff #696969 #696969 #fff;box-shadow:inset -1px -1px 0 #a0a0a0,inset 1px 1px 0 #e3e3e3"></div>
<div class="btn" style="left:15px;top:307px;width:80px;height:20px;line-height:18px;letter-spacing:-0.38px"><span class="s">Apply Color</span></div>
<div class="btn" style="left:100px;top:307px;width:435px;height:20px;line-height:18px;letter-spacing:-0.35px"><span class="s">Apply Gradient</span></div>
<div class="btn" style="left:540px;top:307px;width:80px;height:20px;line-height:18px;letter-spacing:-0.38px"><span class="s">Apply Color</span></div>
<div class="abs" style="left:15px;top:333px;width:13px;height:13px;background:#fff;border:1px solid;border-color:#a0a0a0 #fff #fff #a0a0a0;box-shadow:inset 1px 1px 0 #696969,inset -1px -1px 0 #e3e3e3"></div>
<div class="abs sy" style="left:33.300px;top:333px;line-height:14px;font-size:11px;letter-spacing:-0.22px">Value Link</div>
<div class="btn" style="left:100px;top:332px;width:520px;height:20px;line-height:18px;letter-spacing:-0.25px"><span class="s">New Line</span></div>
<div class="abs" style="left:15px;top:357px;width:606px;height:201px;background:#1a2231;border:1px solid;border-color:#a0a0a0 #fff #fff #a0a0a0;box-shadow:inset 1px 1px 0 #696969,inset -1px -1px 0 #696969,inset 2px 2px 0 #696969,inset -3px -3px 0 #fff"></div>
<div class="abs pv" style="left:19.500px;top:360px"><span style="letter-spacing:-0.03px">Щитоносец наносит оглушающий удар своим</span><br><span style="letter-spacing:0.05px">тяжеленным щитом.</span><br><span style="letter-spacing:0.36px"><span class="y">Урон (маг.):</span> 0</span><br><span style="letter-spacing:-0.02px"><span class="y">Оглушение (сек):</span> 0</span><br><span style="letter-spacing:0.05px"><span class="y">Перезарядка:</span> 0</span></div>
<div class="btn" style="left:471px;top:570px;width:70px;height:20px;line-height:18px"><span class="s">OK</span></div>
<div class="btn" style="left:551px;top:570px;width:70px;height:20px;line-height:18px;letter-spacing:-0.15px"><span class="s">Отмена</span></div>

<svg class="abs" style="left:1426px;top:470px" width="16" height="22" viewBox="0 0 16 22"><path d="M1.500 1.300 V17.800 L5.500 14 L8.100 20 L10.500 19 L8 13 H13 Z" fill="#fff" stroke="#10101c" stroke-width="1.100" stroke-linejoin="round"/></svg>

</body></html>
